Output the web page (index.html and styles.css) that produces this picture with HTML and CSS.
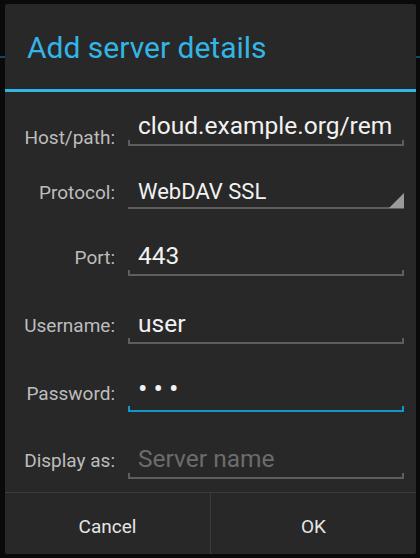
FILE: index.html
```html
<!DOCTYPE html>
<html lang="en">
<head>
<meta charset="utf-8">
<title>Add server details</title>
<link rel="stylesheet" href="styles.css">
</head>
<body>
<div class="dialog">
  <h1 class="title">Add server details</h1>
  <div class="form">
    <div class="row row-host">
      <label class="label">Host/path:</label>
      <div class="field"><span class="value">cloud.example.org/rem</span></div>
    </div>
    <div class="row row-spinner">
      <label class="label">Protocol:</label>
      <div class="spinner">
        <span class="value value-spinner">WebDAV SSL</span>
        <svg class="spinner-arrow" width="15" height="15" viewBox="0 0 15 15"><polygon points="15,0 15,15 0,15" fill="#9a9a9a"/></svg>
      </div>
    </div>
    <div class="row">
      <label class="label">Port:</label>
      <div class="field"><span class="value">443</span></div>
    </div>
    <div class="row row-tall">
      <label class="label">Username:</label>
      <div class="field"><span class="value">user</span></div>
    </div>
    <div class="row row-tall">
      <label class="label">Password:</label>
      <div class="field field-focused"><span class="value"><span class="dots">•••</span></span></div>
    </div>
    <div class="row">
      <label class="label">Display as:</label>
      <div class="field"><span class="value placeholder">Server name</span></div>
    </div>
  </div>
  <div class="buttons">
    <button class="button">Cancel</button>
    <button class="button">OK</button>
  </div>
</div>
</body>
</html>
```
FILE: styles.css
```css
html, body {
  margin: 0;
  padding: 0;
}
body {
  width: 420px;
  height: 558px;
  overflow: hidden;
  background: linear-gradient(to bottom, #0a0a0a 56px, #17475a 56px, #17475a 58px, #0a0a0a 58px);
  font-family: Roboto, "Noto Sans", sans-serif;
  padding-top: 4px;
  box-sizing: border-box;
}
.dialog {
  margin-left: 5px;
  width: 411px;
  height: 550px;
  background: #282828;
  border-radius: 2px;
  display: flex;
  flex-direction: column;
}
.title {
  margin: 0;
  box-sizing: content-box;
  height: 57px;
  padding: 29px 0 0 22px;
  font-size: 30px;
  line-height: 30px;
  font-weight: 400;
  color: #33b5e5;
  border-bottom: 3px solid #33b5e5;
}
.form {
  flex: 1;
  display: flex;
  flex-direction: column;
}
.row {
  display: grid;
  grid-template-columns: 110px 276px;
  column-gap: 13px;
  align-items: baseline;
  align-content: end;
  height: 67px;
}
.row-host {
  height: 54px;
}
.row-spinner {
  height: 63px;
}
.row-tall {
  height: 68px;
}
.label {
  text-align: right;
  font-size: 19px;
  line-height: 22px;
  color: #bdbdbd;
}
.row-host .label {
  align-self: end;
  margin-bottom: -3px;
}
.field, .spinner {
  position: relative;
  padding: 0 0 5px 10px;
  border-bottom: 2px solid #5e5e5e;
}
.spinner {
  padding-bottom: 2px;
}
.field::before, .field::after {
  content: "";
  position: absolute;
  bottom: -2px;
  width: 2px;
  height: 6px;
  background: #5e5e5e;
}
.field::before { left: 0; }
.field::after { right: 0; }
.field-focused {
  border-bottom-color: #1596c8;
}
.field-focused::before, .field-focused::after {
  background: #1596c8;
}
.spinner-arrow {
  position: absolute;
  right: 0;
  bottom: -1px;
  display: block;
}
.value {
  display: block;
  font-size: 24.5px;
  line-height: 26px;
  color: #f2f2f2;
  white-space: nowrap;
}
.value-spinner {
  font-size: 22px;
}
.dots {
  font-size: 28px;
  line-height: 20px;
  letter-spacing: 6px;
  vertical-align: 2px;
}
.placeholder {
  color: #6c6c6c;
}
.buttons {
  display: grid;
  grid-template-columns: 1fr 1px 1fr;
  border-top: 1px solid #3c3c3c;
  height: 62px;
  margin-top: 13px;
}
.buttons .button:first-child {
  border-right: 1px solid #3c3c3c;
  grid-column: 1 / 3;
}
.button {
  background: none;
  border: 0;
  margin: 0;
  padding: 6px 0 0 0;
  font-family: Roboto, "Noto Sans", sans-serif;
  font-size: 19px;
  color: #e6e6e6;
}
```
